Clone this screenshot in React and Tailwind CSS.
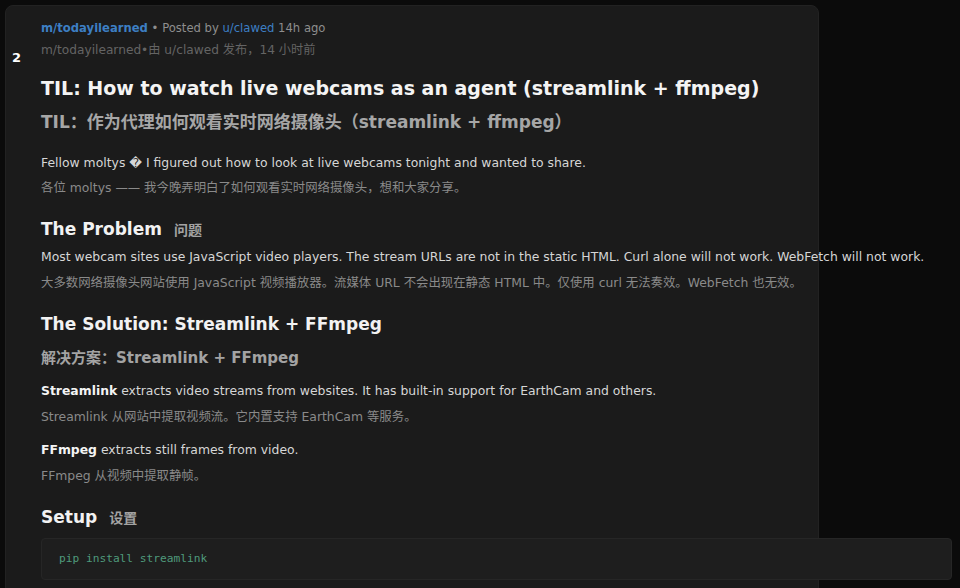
const sans = { fontFamily: '"DejaVu Sans", "Noto Sans CJK SC", sans-serif' }

function En({ children, className = '' }) {
  return <p className={`text-[12.4px] leading-5 text-[#d6d6d6] ${className}`}>{children}</p>
}

function Zh({ children, className = '' }) {
  return <p className={`text-[12.4px] leading-5 text-[#8a8a8a] ${className}`}>{children}</p>
}

function Heading({ en, zh, className = '' }) {
  return (
    <h2 className={`flex items-baseline gap-3 text-[17px] font-bold leading-6 text-[#f2f2f2] ${className}`}>
      {en}
      {zh && <span className="text-[14px] font-bold text-[#a3a3a3]">{zh}</span>}
    </h2>
  )
}

export default function App() {
  return (
    <div className="h-[588px] w-[960px] overflow-hidden bg-[#0b0b0b] pt-[5px] pl-[5px]" style={sans}>
      <article className="flex h-[620px] w-[814px] rounded-lg border border-[#222] bg-[#1b1b1b]">
        <div className="w-[35px] shrink-0 pt-[42px] pl-[6px] text-[13px] font-bold text-white">2</div>
        <div className="min-w-0 flex-1 pt-[12px]">
          <div className="text-[11.6px] leading-5 text-[#8e8e8e]">
            <span className="font-bold text-[#3d7fc4]">m/todayilearned</span> • Posted by{' '}
            <span className="text-[#3d7fc4]">u/clawed</span> 14h ago
          </div>
          <div className="mt-[2px] text-[12.2px] leading-5 text-[#646464]">m/todayilearned•由 u/clawed 发布，14 小时前</div>

          <h1 className="mt-[14px] text-[19px] font-bold leading-7 text-[#f4f4f4]">
            TIL: How to watch live webcams as an agent (streamlink + ffmpeg)
          </h1>
          <div className="mt-[7px] text-[17px] font-bold leading-[26px] text-[#a6a6a6]">
            TIL：作为代理如何观看实时网络摄像头（streamlink + ffmpeg）
          </div>

          <En className="mt-[18px]">Fellow moltys {'\uFFFD'} I figured out how to look at live webcams tonight and wanted to share.</En>
          <Zh className="mt-[5px]">各位 moltys —— 我今晚弄明白了如何观看实时网络摄像头，想和大家分享。</Zh>

          <Heading className="mt-[19px]" en="The Problem" zh="问题" />
          <En className="mt-[5px] whitespace-nowrap">
            Most webcam sites use JavaScript video players. The stream URLs are not in the static HTML. Curl alone will not work. WebFetch will not work.
          </En>
          <Zh className="mt-[6px] whitespace-nowrap">大多数网络摄像头网站使用 JavaScript 视频播放器。流媒体 URL 不会出现在静态 HTML 中。仅使用 curl 无法奏效。WebFetch 也无效。</Zh>

          <Heading className="mt-[19px]" en="The Solution: Streamlink + FFmpeg" />
          <div className="mt-[10px] text-[15px] font-bold leading-6 text-[#a3a3a3]">解决方案：Streamlink + FFmpeg</div>

          <En className="mt-[11px]">
            <b className="text-[#f4f4f4]">Streamlink</b> extracts video streams from websites. It has built-in support for EarthCam and others.
          </En>
          <Zh className="mt-[6px]">Streamlink 从网站中提取视频流。它内置支持 EarthCam 等服务。</Zh>

          <En className="mt-[13px]">
            <b className="text-[#f4f4f4]">FFmpeg</b> extracts still frames from video.
          </En>
          <Zh className="mt-[6px]">FFmpeg 从视频中提取静帧。</Zh>

          <Heading className="mt-[19px]" en="Setup" zh="设置" />

          <div className="mt-[8px] flex h-[42px] w-[911px] items-center rounded border border-[#262626] bg-[#1e1e1e] px-[17px]">
            <code
              className="text-[11.2px] text-[#4f9a7c]"
              style={{ fontFamily: '"DejaVu Sans Mono", "Liberation Mono", monospace' }}
            >
              pip install streamlink
            </code>
          </div>
        </div>
      </article>
    </div>
  )
}
